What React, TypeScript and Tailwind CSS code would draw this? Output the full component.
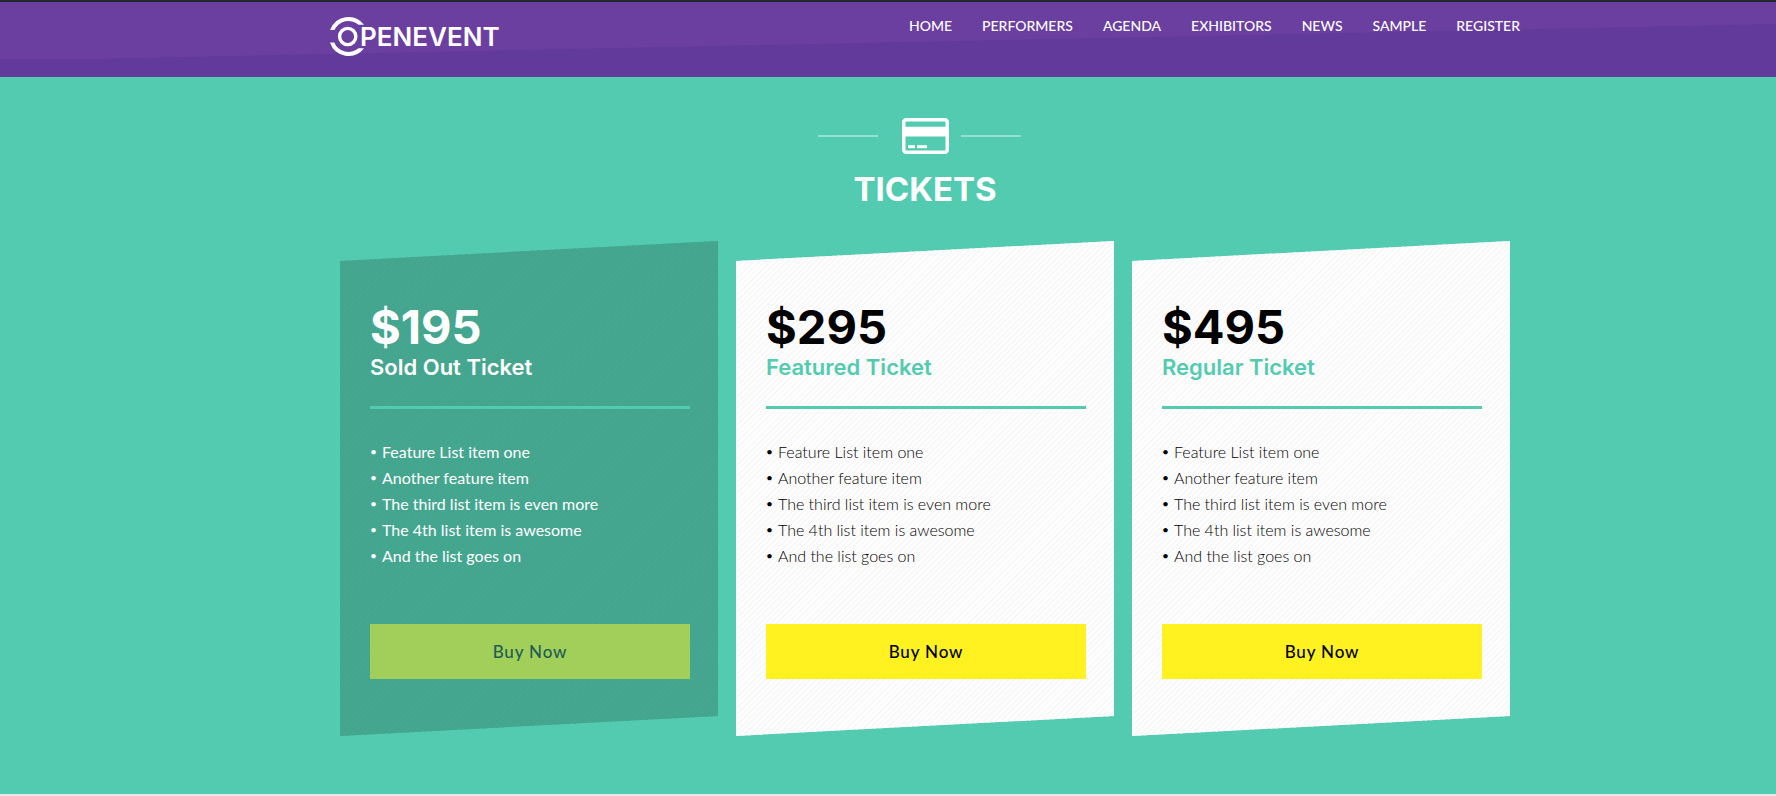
import clsx from "clsx"

const navItems = ["Home", "Performers", "Agenda", "Exhibitors", "News", "Sample", "Register"]

const features = [
  "Feature List item one",
  "Another feature item",
  "The third list item is even more",
  "The 4th list item is awesome",
  "And the list goes on",
]

type Ticket = {
  price: string
  name: string
  soldOut?: boolean
}

const tickets: Ticket[] = [
  { price: "$195", name: "Sold Out Ticket", soldOut: true },
  { price: "$295", name: "Featured Ticket" },
  { price: "$495", name: "Regular Ticket" },
]

function Logo() {
  return (
    <a href="#home" aria-label="OpenEvent" className="flex items-center text-white">
      <svg viewBox="0 0 36 41" className="h-[41px] w-9 shrink-0" fill="currentColor">
        {/* outer arcs */}
        <path d="M0.1 14A19.5 19.5 0 0 1 34 8.7H28.5A15.5 15.5 0 0 0 4.4 14Z" />
        <path d="M0 26.5A19.5 19.5 0 0 0 34 32.3H28.5A15.5 15.5 0 0 1 4.2 26.5Z" />
        <circle cx="17.7" cy="20.5" r="8.1" fill="none" stroke="currentColor" strokeWidth="3.4" />
      </svg>
      <span className="-ml-1.5 font-['Inter',sans-serif] text-[26px] leading-10 font-semibold">PENEVENT</span>
    </a>
  )
}

function Header() {
  return (
    <header className="relative border-t-2 border-[#23282d] bg-[#6b3fa0] pl-[74px]">
      {/* darker slanted band */}
      <div className="absolute inset-0 bg-[#613a9b] [clip-path:polygon(0_57px,5%_57px,100%_22px,100%_100%,0_100%)]" />
      <div className="relative mx-auto flex h-[75px] max-w-[1190px] items-start justify-between pt-[14px]">
        <Logo />
        <nav>
          <ul className="flex gap-[30px]">
            {navItems.map((item) => (
              <li key={item}>
                <a href={`#${item.toLowerCase()}`} className="block text-sm font-medium text-white uppercase">
                  {item}
                </a>
              </li>
            ))}
          </ul>
        </nav>
      </div>
    </header>
  )
}

function SectionTitle() {
  return (
    <div className="flex flex-col items-center text-white">
      <div className="flex items-center pr-3">
        <span className="h-0.5 w-[60px] bg-white/40" />
        <svg viewBox="0 0 47 37" className="mr-3 ml-6 h-9 w-[47px]" preserveAspectRatio="none">
          <rect x="1.75" y="1.75" width="43.5" height="33.5" rx="2.5" fill="none" stroke="currentColor" strokeWidth="3.5" />
          <rect x="2" y="9" width="43" height="10" fill="currentColor" />
          <rect x="6" y="28" width="7" height="3" fill="currentColor" />
          <rect x="15" y="28" width="10" height="3" fill="currentColor" />
        </svg>
        <span className="h-0.5 w-[60px] bg-white/40" />
      </div>
      <h2 className="mt-[15px] font-['Inter',sans-serif] text-[33px] leading-10 font-bold">TICKETS</h2>
    </div>
  )
}

function TicketCard({ price, name, soldOut }: Ticket) {
  return (
    <article
      className={clsx(
        "pt-[60px] pr-7 pb-[57px] pl-[30px] [clip-path:polygon(0_20px,100%_0,100%_calc(100%-20px),0_100%)]",
        soldOut
          ? "bg-[#46a790] bg-[repeating-linear-gradient(135deg,transparent_0_2px,#44a58e_2px_4px)] text-white"
          : "bg-white bg-[repeating-linear-gradient(135deg,transparent_0_2px,#f8f8f8_2px_4px)] text-black"
      )}
    >
      <p className="font-['Inter',sans-serif] text-[47px] leading-[52px] font-bold">{price}</p>
      <h3
        className={clsx(
          "font-['Inter',sans-serif] text-[22px] leading-7 font-semibold",
          !soldOut && "text-[#53cbb1]"
        )}
      >
        {name}
      </h3>
      <hr className="mt-[25px] border-t-[3px] border-[#53cbb1]" />
      <ul className={clsx("mt-[30px] leading-[26px]", !soldOut && "font-light")}>
        {features.map((feature) => (
          <li key={feature} className="flex">
            <span className="w-3 text-xs leading-[26px] font-normal">•</span>
            {feature}
          </li>
        ))}
      </ul>
      <button
        disabled={soldOut}
        className={clsx(
          "mt-[55px] h-[55px] w-full text-[17px] font-medium tracking-wider",
          soldOut ? "bg-[#a1cf5a] text-[#1f5c52]" : "bg-[#fff220] text-black"
        )}
      >
        Buy Now
      </button>
    </article>
  )
}

export default function App() {
  return (
    <div className="font-['Lato','Liberation_Sans',sans-serif]">
      <Header />
      <main className="border-b-2 border-[#e5e5e5] bg-[#53cbb1] pt-[41px] pb-[58px] pl-[74px]">
        <div className="mx-auto max-w-[1190px] px-[10px]">
          <SectionTitle />
          <div className="mt-8 grid grid-cols-3 gap-[18px]">
            {tickets.map((ticket) => (
              <TicketCard key={ticket.name} {...ticket} />
            ))}
          </div>
        </div>
      </main>
    </div>
  )
}
